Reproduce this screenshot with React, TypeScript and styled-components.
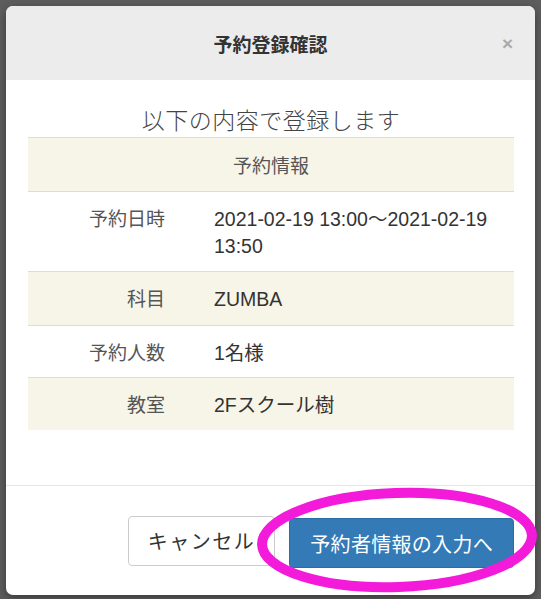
import React from 'react'
import styled, { createGlobalStyle } from 'styled-components'

const GlobalStyle = createGlobalStyle`
  html, body {
    margin: 0;
    padding: 0;
    background: #5d5d5d;
  }
  body {
    font-family: "Liberation Sans", "Noto Sans CJK JP", sans-serif;
    color: #333;
  }
`

const Backdrop = styled.div`
  position: relative;
  width: 541px;
  height: 599px;
  box-sizing: border-box;
  padding: 6px 6px 4px 6px;
  background: #5d5d5d;
  overflow: hidden;
`

const Modal = styled.div`
  width: 529px;
  height: 589px;
  background: #fff;
  border-radius: 7px;
  overflow: hidden;
  display: flex;
  flex-direction: column;
  box-shadow: 0 3px 9px rgba(0, 0, 0, 0.4);
`

const Header = styled.div`
  position: relative;
  height: 74px;
  flex-shrink: 0;
  background: #ececec;
  display: flex;
  align-items: center;
  justify-content: center;
`

const Title = styled.h4`
  margin: 0;
  font-size: 19px;
  font-weight: 700;
  color: #333;
`

const Close = styled.span`
  position: absolute;
  right: 22px;
  top: 28px;
  font-size: 19px;
  font-weight: 700;
  line-height: 1;
  color: #aaa;
`

const Body = styled.div`
  flex: 1;
  padding: 25px 21px 0 22px;
`

const Lead = styled.p`
  margin: 0;
  height: 32px;
  line-height: 32px;
  text-align: center;
  font-size: 23px;
  font-weight: 300;
  color: #444;
  letter-spacing: 0.5px;
`

const Table = styled.div`
  display: grid;
  grid-template-columns: 152px 1fr;
  border-top: 1px solid #dcdcdc;
`

const Caption = styled.div`
  grid-column: 1 / 3;
  height: 53px;
  display: flex;
  align-items: center;
  justify-content: center;
  background: #f7f4e8;
  border-bottom: 1px solid #dcdcdc;
  font-size: 19px;
  color: #555;
`

const Label = styled.div<{ $tinted?: boolean; $h: number; $last?: boolean }>`
  min-height: ${p => p.$h}px;
  box-sizing: border-box;
  padding: 14px 15px 0 0;
  text-align: right;
  font-size: 19px;
  line-height: 27px;
  color: #555;
  background: ${p => (p.$tinted ? '#f7f4e8' : '#fff')};
  border-bottom: ${p => (p.$last ? 'none' : '1px solid #dcdcdc')};
`

const Value = styled.div<{ $tinted?: boolean; $h: number; $last?: boolean }>`
  min-height: ${p => p.$h}px;
  box-sizing: border-box;
  padding: 14px 14px 0 34px;
  font-size: 19.5px;
  line-height: 27px;
  color: #333;
  background: ${p => (p.$tinted ? '#f7f4e8' : '#fff')};
  border-bottom: ${p => (p.$last ? 'none' : '1px solid #dcdcdc')};
`

const Footer = styled.div`
  height: 110px;
  flex-shrink: 0;
  box-sizing: border-box;
  border-top: 1px solid #e5e5e5;
  display: flex;
  align-items: center;
  justify-content: flex-end;
  gap: 14px;
  padding: 0 21px 0 0;
`

const Button = styled.button<{ $primary?: boolean }>`
  height: 50px;
  padding: 0 ${p => (p.$primary ? '20px' : '19px')};
  border-radius: 4px;
  font-family: "Liberation Sans", "Noto Sans CJK JP", sans-serif;
  font-size: 20px;
  letter-spacing: ${p => (p.$primary ? '0.3px' : '1.5px')};
  border: 1px solid ${p => (p.$primary ? '#2e6da4' : '#cccccc')};
  background: ${p => (p.$primary ? '#337ab7' : '#fff')};
  color: ${p => (p.$primary ? '#fff' : '#333')};
  margin-top: ${p => (p.$primary ? '5px' : '0')};
`

const Annotation = styled.svg`
  position: absolute;
  left: 257px;
  top: 488px;
  overflow: visible;
  pointer-events: none;
`

const rows = [
  { label: '予約日時', value: '2021-02-19 13:00〜2021-02-19 13:50', h: 80 },
  { label: '科目', value: 'ZUMBA', h: 54 },
  { label: '予約人数', value: '1名様', h: 52 },
  { label: '教室', value: '2Fスクール樹', h: 52 },
]

export default function App() {
  return (
    <>
      <GlobalStyle />
      <Backdrop>
        <Modal>
          <Header>
            <Title>予約登録確認</Title>
            <Close>×</Close>
          </Header>
          <Body>
            <Lead>以下の内容で登録します</Lead>
            <Table>
              <Caption>予約情報</Caption>
              {rows.map((r, i) => {
                const tinted = i % 2 === 1
                const last = i === rows.length - 1
                return (
                  <React.Fragment key={r.label}>
                    <Label $tinted={tinted} $h={r.h} $last={last}>{r.label}</Label>
                    <Value $tinted={tinted} $h={r.h} $last={last}>{r.value}</Value>
                  </React.Fragment>
                )
              })}
            </Table>
          </Body>
          <Footer>
            <Button>キャンセル</Button>
            <Button $primary>予約者情報の入力へ</Button>
          </Footer>
        </Modal>
        <Annotation width="280" height="105" viewBox="0 0 280 105">
          <ellipse
            cx="140"
            cy="52"
            rx="135"
            ry="47"
            fill="none"
            stroke="#f31ad9"
            strokeWidth="10"
            transform="rotate(-2 140 52)"
          />
        </Annotation>
      </Backdrop>
    </>
  )
}
